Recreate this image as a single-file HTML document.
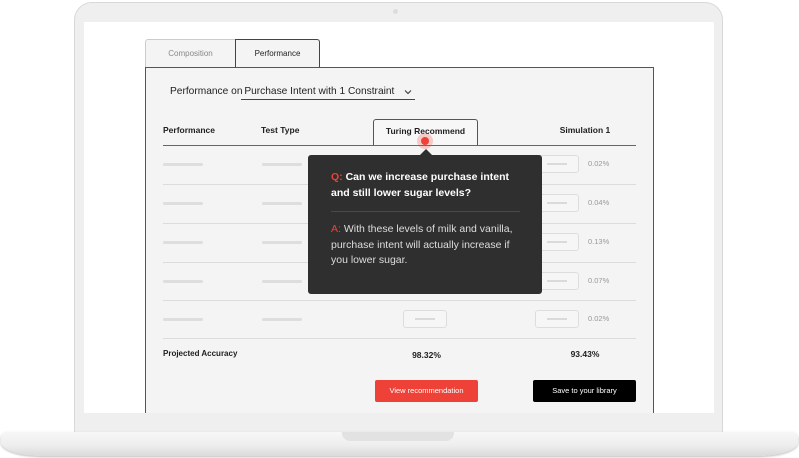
<!DOCTYPE html>
<html><head><style>
*{margin:0;padding:0;box-sizing:border-box}
body{width:799px;height:458px;overflow:hidden;background:#fff;font-family:"Liberation Sans",sans-serif;position:relative}
.a{position:absolute}
.lid{left:74px;top:2px;width:649px;height:436px;background:#efefef;border:1px solid #d8d8d8;border-radius:18px 18px 0 0}
.scr{left:84px;top:22px;width:630px;height:391px;background:#fff;overflow:hidden}
.base{left:1px;top:432px;width:797px;height:24px;background:linear-gradient(#f7f7f7,#eeeeee 55%,#dadada);border-radius:6px 6px 40px 40px / 6px 6px 14px 14px;box-shadow:0 1px 2px #bbb}
.notch{left:342px;top:432px;width:112px;height:9px;background:#e2e2e2;border-radius:0 0 8px 8px}
.t{font-size:10px;color:#1e1e1e;white-space:nowrap}
.bar{height:3px;width:40px;background:#dedede;border-radius:2px}
.box{width:44px;height:18px;border:1px solid #ddd;border-radius:3px;background:#f6f6f6}
.box i{position:absolute;left:11px;top:7px;width:20px;height:2px;background:#dadada}
.line{height:1px;background:#dcdcdc;left:163px;width:473px}
.pct{font-size:7.5px;color:#999}
</style></head><body>
<div class="a lid"></div>
<div class="a" style="left:393px;top:9px;width:5px;height:5px;border-radius:50%;background:#ddd"></div>
<div class="a scr"></div>
<div class="a" style="left:145px;top:39px;width:91px;height:29px;background:#f4f4f4;border:1px solid #ccc;border-bottom:none;border-radius:3px 0 0 0;font-size:8px;color:#888;text-align:center;line-height:28px">Composition</div>
<div class="a" style="left:235px;top:39px;width:85px;height:29px;background:#f4f4f4;border:1px solid #444;border-bottom:none;border-radius:0 3px 0 0;font-size:8px;color:#222;text-align:center;line-height:28px">Performance</div>
<div class="a" style="left:145px;top:67px;width:509px;height:346px;background:#f4f4f4;border:1px solid #555;border-bottom:none"></div>
<div class="a t" style="left:170px;top:86px;font-size:10.2px;color:#222">Performance on <span style="margin-left:-1px">Purchase Intent with 1 Constraint</span></div>
<div class="a" style="left:241px;top:99px;width:174px;height:1px;background:#444"></div>
<svg class="a" style="left:404px;top:89px" width="8" height="6"><path d="M1 1.5L4 4.5L7 1.5" fill="none" stroke="#333" stroke-width="1"/></svg>
<div class="a t" style="left:163px;top:125px;font-weight:bold;font-size:8.5px">Performance</div>
<div class="a t" style="left:261px;top:125px;font-weight:bold;font-size:8.5px">Test Type</div>
<div class="a" style="left:373px;top:119px;width:105px;height:27px;border:1px solid #555;border-bottom:none;border-radius:3px 3px 0 0;background:#f7f7f7"></div>
<div class="a t" style="left:373px;top:126px;width:105px;text-align:center;font-weight:bold;font-size:8.5px">Turing Recommend</div>
<div class="a t" style="left:535px;top:125px;width:100px;text-align:center;font-weight:bold;font-size:8.5px">Simulation 1</div>
<div class="a" style="left:163px;top:145px;width:473px;height:1px;background:#666"></div>
<div class="a line" style="top:184px"></div><div class="a line" style="top:223px"></div><div class="a line" style="top:262px"></div><div class="a line" style="top:300px"></div><div class="a line" style="top:338px"></div>
<div class="a bar" style="left:163px;top:163px"></div><div class="a bar" style="left:262px;top:163px"></div>
<div class="a bar" style="left:163px;top:202px"></div><div class="a bar" style="left:262px;top:202px"></div>
<div class="a bar" style="left:163px;top:241px"></div><div class="a bar" style="left:262px;top:241px"></div>
<div class="a bar" style="left:163px;top:280px"></div><div class="a bar" style="left:262px;top:280px"></div>
<div class="a bar" style="left:163px;top:318px"></div><div class="a bar" style="left:262px;top:318px"></div>
<div class="a box" style="left:535px;top:155px"><i></i></div><div class="a pct" style="left:588px;top:159px">0.02%</div>
<div class="a box" style="left:535px;top:194px"><i></i></div><div class="a pct" style="left:588px;top:198px">0.04%</div>
<div class="a box" style="left:535px;top:233px"><i></i></div><div class="a pct" style="left:588px;top:237px">0.13%</div>
<div class="a box" style="left:535px;top:272px"><i></i></div><div class="a pct" style="left:588px;top:276px">0.07%</div>
<div class="a box" style="left:535px;top:310px"><i></i></div><div class="a pct" style="left:588px;top:314px">0.02%</div>
<div class="a box" style="left:403px;top:310px"><i></i></div>
<div class="a t" style="left:163px;top:349px;font-weight:bold;font-size:8px">Projected Accuracy</div>
<div class="a t" style="left:375px;top:350px;width:103px;text-align:center;font-weight:bold;font-size:8.5px">98.32%</div>
<div class="a t" style="left:535px;top:349px;width:100px;text-align:center;font-weight:bold;font-size:8.5px">93.43%</div>
<div class="a" style="left:375px;top:380px;width:103px;height:22px;background:#ee4238;border-radius:2px;color:#fff;font-size:7.5px;text-align:center;line-height:22px">View recommendation</div>
<div class="a" style="left:533px;top:380px;width:103px;height:22px;background:#000;border-radius:2px;color:#fff;font-size:7.5px;text-align:center;line-height:22px">Save to your library</div>
<div class="a" style="left:308px;top:155px;width:234px;height:139px;background:#2f2f2f;border-radius:3px"></div>
<div class="a" style="left:419px;top:149px;width:0;height:0;border-left:7px solid transparent;border-right:7px solid transparent;border-bottom:7px solid #2f2f2f"></div>
<div class="a" style="left:417px;top:133px;width:16px;height:16px;border-radius:50%;background:rgba(238,66,56,.25)"></div>
<div class="a" style="left:421px;top:137px;width:8px;height:8px;border-radius:50%;background:#ee4238"></div>
<div class="a" style="left:331px;top:170px;font-size:10.5px;line-height:15.5px;color:#fff;font-weight:bold;width:185px"><span style="color:#ee4238">Q:</span> Can we increase purchase intent and still lower sugar levels?</div>
<div class="a" style="left:331px;top:211px;width:189px;height:1px;background:#4a4a4a"></div>
<div class="a" style="left:331px;top:222px;font-size:10.5px;line-height:15.5px;color:#ddd;width:186px"><span style="color:#ee4238">A:</span> With these levels of milk and vanilla, purchase intent will actually increase if you lower sugar.</div>
<div class="a base"></div>
<div class="a notch"></div>
</body></html>
